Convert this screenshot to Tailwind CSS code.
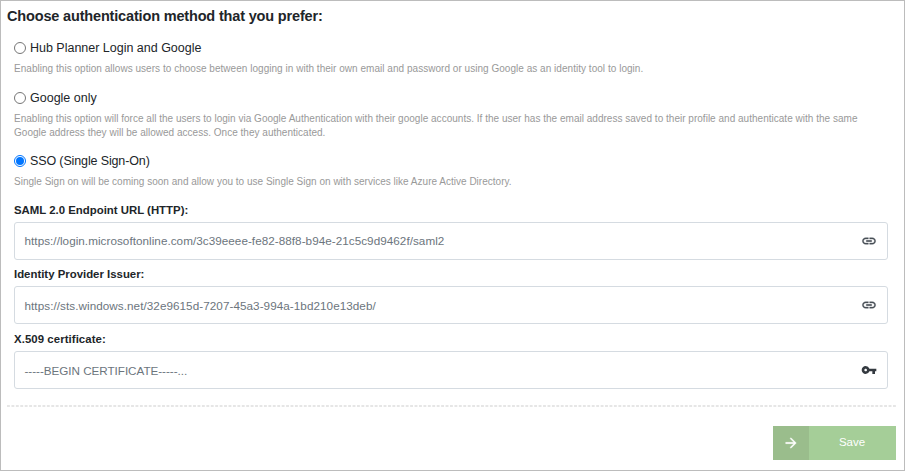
<!DOCTYPE html>
<html lang="en">
<head>
<meta charset="utf-8">
<title>Authentication method</title>
<script src="https://cdn.jsdelivr.net/npm/@tailwindcss/browser@4"></script>
</head>
<body class="bg-white font-['Liberation_Sans',Arial,sans-serif] text-[#212529]">
<main class="h-[471px] w-[905px] overflow-hidden border border-[#bcbcbc] pl-[6px] pr-2">
  <h1 class="mt-[5px] h-[20px] whitespace-nowrap text-[14.5px] leading-[20px] font-bold tracking-[-0.165px]">Choose authentication method that you prefer:</h1>
  <form class="pl-[7px] pr-2">
    <label class="mt-[14px] flex h-4 items-center gap-[4px] whitespace-nowrap text-[12.5px] leading-4">
      <span class="size-3 shrink-0 rounded-full border border-[#767676]"></span><span class="tracking-[-0.01px]">Hub Planner Login and Google</span></label>
    <p class="mt-[6px] h-[14px] whitespace-nowrap text-[10px] leading-[14px] tracking-[0.031px] text-[#999]">Enabling this option allows users to choose between logging in with their own email and password or using Google as an identity tool to login.</p>
    <label class="mt-[14px] flex h-4 items-center gap-[4px] whitespace-nowrap text-[12.5px] leading-4">
      <span class="size-3 shrink-0 rounded-full border border-[#767676]"></span><span>Google only</span></label>
    <p class="mt-[6px] h-[28px] whitespace-nowrap text-[10px] leading-[14px] tracking-[0.018px] text-[#999]">Enabling this option will force all the users to login via Google Authentication with their google accounts. If the user has the email address saved to their profile and authenticate with the same<br>Google address they will be allowed access. Once they authenticated.</p>
    <label class="mt-[13px] flex h-4 items-center gap-[4px] whitespace-nowrap text-[12.5px] leading-4">
      <span class="flex size-3 shrink-0 items-center justify-center rounded-full border border-[#0075ff]"><span class="size-[8px] rounded-full bg-[#0075ff]"></span></span><span class="tracking-[-0.13px]">SSO (Single Sign-On)</span></label>
    <p class="mt-[6px] h-[14px] whitespace-nowrap text-[10px] leading-[14px] tracking-[0.012px] text-[#999]">Single Sign on will be coming soon and allow you to use Single Sign on with services like Azure Active Directory.</p>

    <div class="mt-[13px] h-[16px] text-[11.4px] leading-[16px] font-bold">SAML 2.0 Endpoint URL (HTTP):</div>
    <div class="mt-[4px] flex h-[38px] items-center justify-between rounded-[3px] border border-[#d5dbe1] pr-[10px] pl-[9.5px] text-[11.7px] leading-4 text-[#6c757d]">
      <span class="tracking-[0.045px]">https://login.microsoftonline.com/3c39eeee-fe82-88f8-b94e-21c5c9d9462f/saml2</span>
      <svg class="size-4 text-[#495057]" viewBox="0 0 24 24" fill="currentColor" stroke="currentColor" stroke-width=".5"><path d="M3.900 12c0-1.710 1.390-3.100 3.100-3.100h4V7H7c-2.760 0-5 2.240-5 5s2.240 5 5 5h4v-1.900H7c-1.710 0-3.100-1.390-3.100-3.100zM8 13h8v-2H8v2zm9-6h-4v1.900h4c1.710 0 3.100 1.390 3.100 3.100s-1.390 3.100-3.100 3.100h-4V17h4c2.760 0 5-2.240 5-5s-2.240-5-5-5z"/></svg>
    </div>
    <div class="mt-[6px] h-[16px] text-[11.4px] leading-[16px] font-bold">Identity Provider Issuer:</div>
    <div class="mt-[4px] flex h-[38px] items-center justify-between rounded-[3px] border border-[#d5dbe1] pr-[10px] pl-[9.5px] text-[11.7px] leading-4 text-[#6c757d]">
      <span class="pt-[2px] tracking-[0.06px]">https://sts.windows.net/32e9615d-7207-45a3-994a-1bd210e13deb/</span>
      <svg class="size-4 text-[#495057]" viewBox="0 0 24 24" fill="currentColor" stroke="currentColor" stroke-width=".5"><path d="M3.900 12c0-1.710 1.390-3.100 3.100-3.100h4V7H7c-2.760 0-5 2.240-5 5s2.240 5 5 5h4v-1.900H7c-1.710 0-3.100-1.390-3.100-3.100zM8 13h8v-2H8v2zm9-6h-4v1.900h4c1.710 0 3.100 1.390 3.100 3.100s-1.390 3.100-3.100 3.100h-4V17h4c2.760 0 5-2.240 5-5s-2.240-5-5-5z"/></svg>
    </div>
    <div class="mt-[7px] h-[16px] text-[11.4px] leading-[16px] font-bold tracking-[0.07px]">X.509 certificate:</div>
    <div class="mt-[4px] flex h-[38px] items-center justify-between rounded-[3px] border border-[#d5dbe1] pr-[10px] pl-[9.5px] text-[11.7px] leading-4 text-[#6c757d]">
      <span class="pt-[2px] tracking-[-0.04px]">-----BEGIN CERTIFICATE-----...</span>
      <svg class="size-4 text-[#343a40]" viewBox="0 0 24 24" fill="currentColor"><path d="M12.650 10A5.990 5.990 0 0 0 7 6c-3.310 0-6 2.690-6 6s2.690 6 6 6a5.990 5.990 0 0 0 5.650-4H17v4h4v-4h2v-4H12.650zM7 14c-1.100 0-2-.9-2-2s.9-2 2-2 2 .9 2 2-.9 2-2 2z"/></svg>
    </div>
  </form>
  <svg class="mt-4 block h-[2px] w-[889px]" viewBox="0 0 889 2"><path d="M0 1H889" stroke="#dedede" stroke-width="1.500" stroke-dasharray="2.900 1.530"/></svg>
  <button class="mt-[19px] ml-auto flex h-[34px] w-[123px] bg-[#a5ce98] text-[11.5px] text-white">
    <span class="flex h-full w-9 items-center justify-center bg-[#9abd8c]"><svg class="size-4" viewBox="0 0 24 24" fill="currentColor" stroke="currentColor" stroke-width=".5"><path d="M12 4l-1.410 1.410L16.170 11H4v2h12.170l-5.580 5.590L12 20l8-8z"/></svg></span>
    <span class="flex h-full flex-1 items-center justify-center pr-px pb-px">Save</span>
  </button>
</main>
</body>
</html>
